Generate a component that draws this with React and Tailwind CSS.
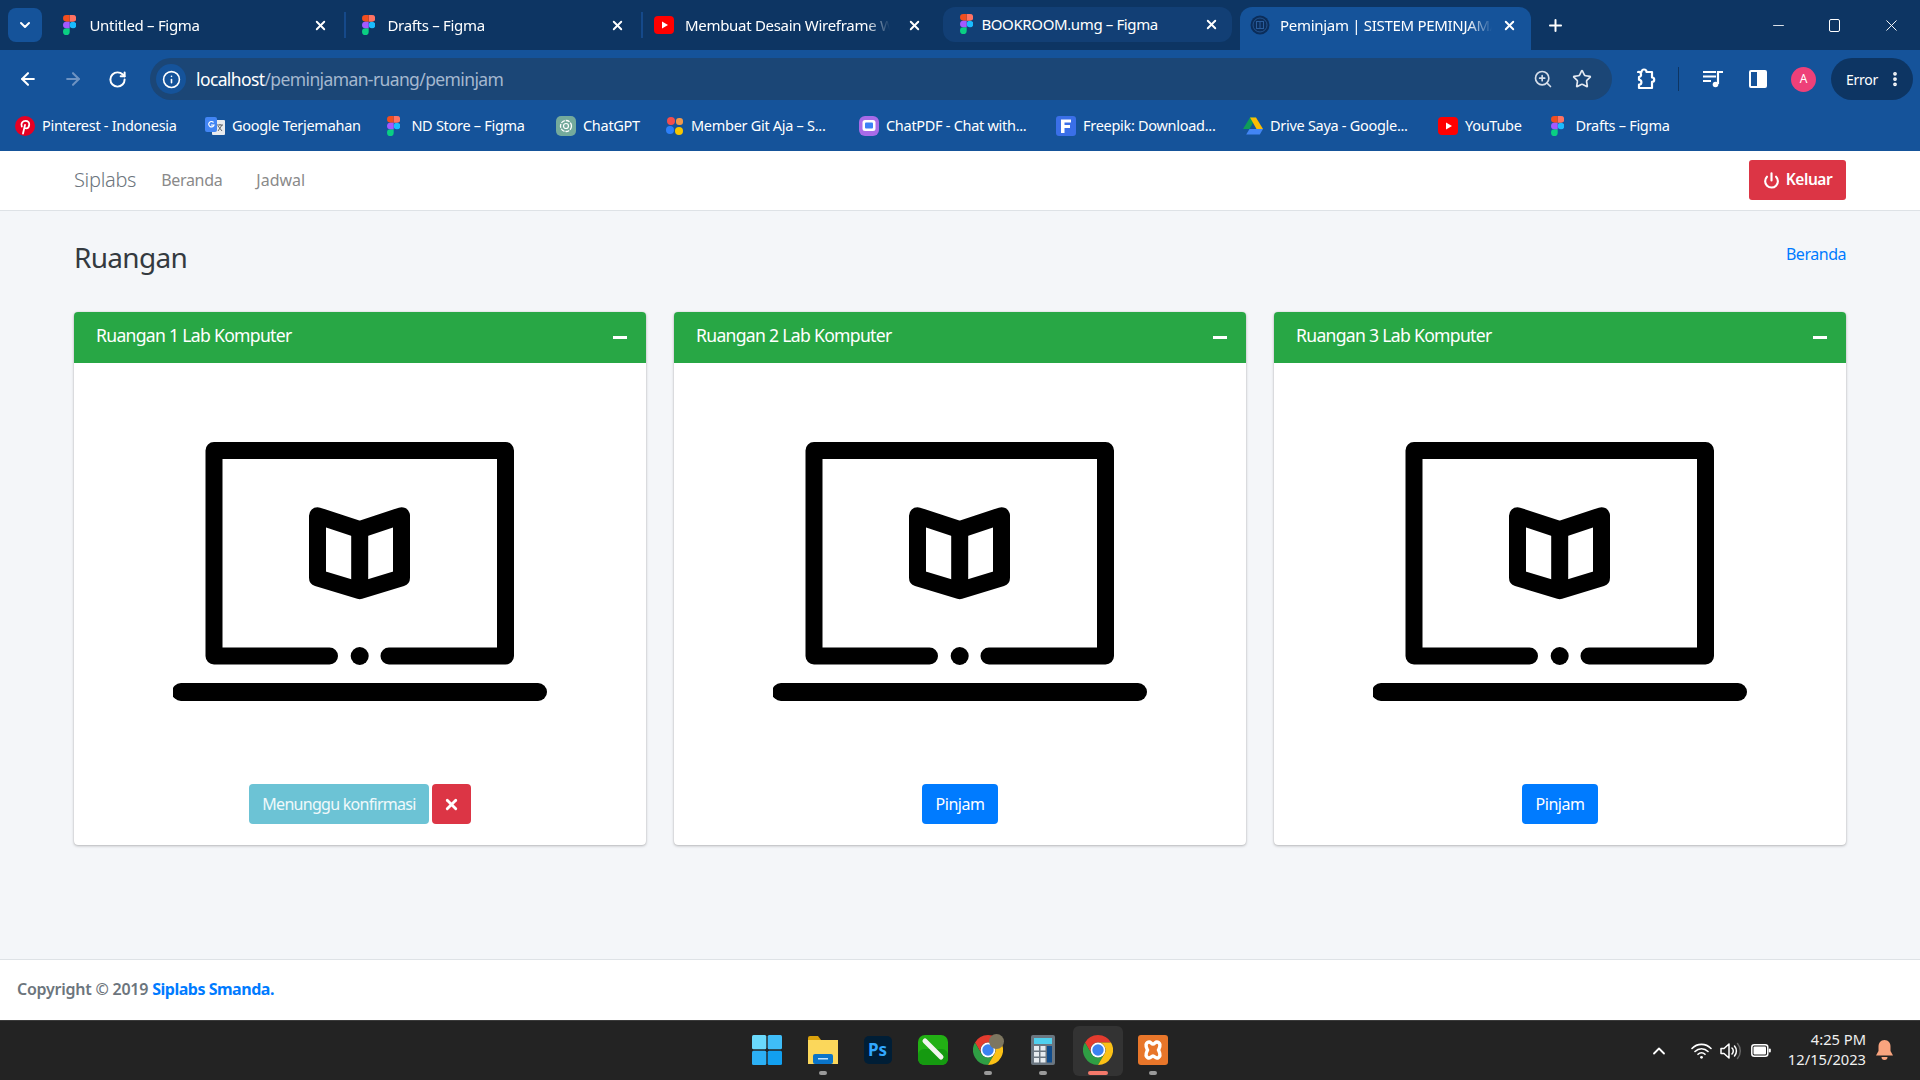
import { ArrowLeft, ArrowRight, RotateCw, Info, ZoomIn, Star, MoreVertical, Plus, X, Minus, ChevronDown, ChevronUp, Power } from 'lucide-react';

const sans = 'font-["Noto_Sans",sans-serif]';

// favicons
const FigmaIcon = ({ size = 20 }) => (
  <svg width={size * 0.67} height={size} viewBox="0 0 38 57" className="shrink-0">
    <path fill="#1abcfe" d="M19 28.5a9.5 9.5 0 1 1 19 0 9.5 9.5 0 0 1-19 0z" />
    <path fill="#0acf83" d="M0 47.5A9.5 9.5 0 0 1 9.5 38H19v9.5a9.5 9.5 0 1 1-19 0z" />
    <path fill="#ff7262" d="M19 0v19h9.5a9.5 9.5 0 1 0 0-19H19z" />
    <path fill="#f24e1e" d="M0 9.5A9.5 9.5 0 0 0 9.5 19H19V0H9.5A9.5 9.5 0 0 0 0 9.5z" />
    <path fill="#a259ff" d="M0 28.5A9.5 9.5 0 0 0 9.5 38H19V19H9.5A9.5 9.5 0 0 0 0 28.5z" />
  </svg>
);

const YoutubeIcon = () => (
  <svg width="20" height="20" viewBox="0 0 20 20" className="shrink-0">
    <rect y="1" width="20" height="18" rx="4" fill="#f00" />
    <path d="M8 6.5 14 10l-6 3.5z" fill="#fff" />
  </svg>
);

const PinterestIcon = () => (
  <svg width="20" height="20" viewBox="0 0 20 20" className="shrink-0">
    <circle cx="10" cy="10" r="10" fill="#e60023" />
    <path d="M8 17.5 10 9M6.8 10.5C5.5 7.5 7.7 4.8 10.5 4.8c2.6 0 4 1.8 3.7 4-.3 2.3-1.6 3.7-3.1 3.6-1 0-1.6-.6-1.7-1.3" fill="none" stroke="#fff" strokeWidth="1.8" strokeLinecap="round" />
  </svg>
);

const TranslateIcon = () => (
  <svg width="20" height="20" viewBox="0 0 20 20" className="shrink-0">
    <rect x="7" y="4" width="13" height="15" rx="1" fill="#e8eaed" />
    <path d="M12 9h6M15 8v1M13 15l4-6M13 10l4 5" stroke="#5f6368" strokeWidth="1" fill="none" />
    <rect y="1" width="12" height="15" rx="2" fill="#4285f4" />
    <path d="M8.5 6.5A2.7 2.7 0 1 0 9 9H6" stroke="#fff" strokeWidth="1.2" fill="none" />
  </svg>
);

const ChatGptIcon = () => (
  <svg width="20" height="20" viewBox="0 0 20 20" className="shrink-0">
    <rect width="20" height="20" rx="5" fill="#74aa9c" />
    <circle cx="10" cy="10" r="5.5" fill="none" stroke="#fff" strokeWidth="1.3" strokeDasharray="4 1" />
    <circle cx="10" cy="10" r="2.5" fill="none" stroke="#fff" strokeWidth="1.2" />
  </svg>
);

const MemberIcon = () => (
  <svg width="18" height="20" viewBox="0 0 18 20" className="shrink-0">
    <circle cx="5" cy="5" r="4" fill="#f24e4e" />
    <rect x="10" y="2" width="7" height="7" rx="3" fill="#f2994a" />
    <circle cx="4" cy="14" r="4" fill="#2d7ff9" />
    <circle cx="13" cy="15" r="4" fill="#f7c600" />
  </svg>
);

const ChatPdfIcon = () => (
  <svg width="20" height="20" viewBox="0 0 20 20" className="shrink-0">
    <rect width="20" height="20" rx="6" fill="#a86be8" />
    <rect x="3.5" y="4" width="13" height="11" rx="2.5" fill="#fff" />
    <rect x="6" y="6.5" width="8" height="6" rx="1" fill="#3b82f6" />
  </svg>
);

const FreepikIcon = () => (
  <svg width="20" height="20" viewBox="0 0 20 20" className="shrink-0">
    <rect width="20" height="20" rx="3" fill="#3a6fe8" />
    <path d="M5 3.5h10v3H8.5v2.5H14v3H8.5V17H5z" fill="#fff" />
  </svg>
);

const DriveIcon = () => (
  <svg width="20" height="20" viewBox="0 0 20 20" className="shrink-0">
    <path d="M7 1.5h6L6.5 13H0z" fill="#0f9d58" />
    <path d="M7 1.5h6l7 11.5h-6.5z" fill="#fbbc04" />
    <path d="M3.2 18.5 6.5 13H20l-3.2 5.5z" fill="#4285f4" />
  </svg>
);

const SiteIcon = () => (
  <svg width="20" height="20" viewBox="0 0 20 20" className="shrink-0">
    <circle cx="10" cy="10" r="9.5" fill="#0b2d5a" />
    <circle cx="10" cy="10" r="7" fill="none" stroke="#2a5d9c" strokeWidth="0.8" />
    <rect x="6.5" y="6.5" width="7" height="7" fill="none" stroke="#2a5d9c" strokeWidth="1" />
    <path d="M10 6.5v7" stroke="#2a5d9c" strokeWidth="1" />
  </svg>
);

const ExtensionIcon = () => (
  <svg width="22" height="22" viewBox="0 0 22 22" fill="none" stroke="#fff" strokeWidth="2.2" strokeLinejoin="round">
    <path d="M4 4h3.5a2.5 2.5 0 0 1 5 0H18v5.5a2.2 2.2 0 0 1 0 4.4V20H5v-3.4a2.4 2.4 0 0 0 0-4.8V9a2.5 2.5 0 0 0-1-5z" />
  </svg>
);

const MediaIcon = () => (
  <svg width="21" height="21" viewBox="0 0 21 21" fill="none" stroke="#fff" strokeWidth="2.2">
    <path d="M0 3h13M0 7.5h13M0 12h8" />
    <path d="M15 3h5M15 2v13" />
    <circle cx="12.5" cy="15.5" r="2.8" fill="#fff" stroke="none" />
  </svg>
);

const ChromeIcon = () => (
  <svg width="30" height="30" viewBox="0 0 30 30">
    <path d="M15 0A15 15 0 0 1 28 7.5H15A7.5 7.5 0 0 0 8.5 18.75L2 7.5A15 15 0 0 1 15 0z" fill="#e33b2e" />
    <path d="M2 7.5 8.5 18.75A7.5 7.5 0 0 0 21.5 18.75L15 30A15 15 0 0 1 2 7.5z" fill="#2f9e44" />
    <path d="M28 7.5A15 15 0 0 1 15 30L21.5 18.75A7.5 7.5 0 0 0 15 7.5H28z" fill="#fbc116" />
    <circle cx="15" cy="15" r="7.4" fill="#fff" />
    <circle cx="15" cy="15" r="5.7" fill="#3b82f0" />
  </svg>
);

const tabs = [
  { title: 'Untitled – Figma', icon: <FigmaIcon />, cls: 'w-[297px] pl-[16px] gap-[13px]' },
  { title: 'Drafts – Figma', icon: <FigmaIcon />, cls: 'w-[297px] pl-[16px] gap-[12px] border-l-2 border-[#15498a]' },
  { title: 'Membuat Desain Wireframe We', icon: <YoutubeIcon />, cls: 'w-[297px] pl-[11px] gap-[11px] border-l-2 border-[#15498a]' },
];

const bookmarks = [
  { title: 'Pinterest - Indonesia', icon: <PinterestIcon />, w: 'w-[190px]' },
  { title: 'Google Terjemahan', icon: <TranslateIcon />, w: 'w-[182px]' },
  { title: 'ND Store – Figma', icon: <FigmaIcon />, w: 'w-[169px]', gap: 'gap-[11px]' },
  { title: 'ChatGPT', icon: <ChatGptIcon />, w: 'w-[110px]' },
  { title: 'Member Git Aja – S...', icon: <MemberIcon />, w: 'w-[193px]' },
  { title: 'ChatPDF - Chat with...', icon: <ChatPdfIcon />, w: 'w-[197px]' },
  { title: 'Freepik: Download...', icon: <FreepikIcon />, w: 'w-[187px]' },
  { title: 'Drive Saya - Google...', icon: <DriveIcon />, w: 'w-[195px]' },
  { title: 'YouTube', icon: <YoutubeIcon />, w: 'w-[113px]' },
  { title: 'Drafts – Figma', icon: <FigmaIcon />, w: 'w-[130px]', gap: 'gap-[11px]' },
];

const BrowserChrome = () => (
  <div className={`shrink-0 text-white ${sans}`}>
    {/* tab strip */}
    <div className="h-[50px] bg-[#0d3563] flex items-center pl-[8px]">
      <div className="w-[34px] h-[34px] rounded-lg bg-[#15539a] flex items-center justify-center mr-[5px] -mt-[1px]">
        <ChevronDown size={16} strokeWidth={3} />
      </div>
      {tabs.map((t) => (
        <div key={t.title} className={`${t.cls} h-[26px] flex items-center pr-[16px]`}>
          {t.icon}
          <span className="flex-1 min-w-0 overflow-hidden whitespace-nowrap text-[15px] tracking-[-0.02em] [mask-image:linear-gradient(to_left,transparent,black_24px)]">{t.title}</span>
          <X size={15} strokeWidth={3} className="shrink-0 ml-[6px]" />
        </div>
      ))}
      <div className="w-[289px] h-[35px] ml-[5px] -mt-[2px] rounded-xl bg-[#123f75] flex items-center gap-[8px] pl-[17px] pr-[13px]">
        <FigmaIcon />
        <span className="flex-1 whitespace-nowrap text-[15px] tracking-[-0.025em]">BOOKROOM.umg – Figma</span>
        <X size={15} strokeWidth={3} />
      </div>
      <div className="w-[291px] h-[43px] ml-[8px] mt-[7px] pb-[7px] rounded-t-xl bg-[#15539a] flex items-center gap-[10px] pl-[10px] pr-[14px]">
        <SiteIcon />
        <span className="flex-1 min-w-0 overflow-hidden whitespace-nowrap text-[15px] tracking-[-0.02em] [mask-image:linear-gradient(to_left,transparent,black_24px)]">Peminjam | SISTEM PEMINJAMA</span>
        <X size={15} strokeWidth={3} className="shrink-0" />
      </div>
      <Plus size={19} strokeWidth={2.5} className="ml-[15px]" />
      <div className="ml-auto flex items-center">
        <Minus size={17} strokeWidth={1.2} className="mr-[42px]" />
        <div className="w-[11px] h-[13px] border border-white rounded-[2px] mr-[42px]" />
        <X size={19} strokeWidth={1.2} className="mr-[19px]" />
      </div>
    </div>

    {/* toolbar */}
    <div className="h-[50px] bg-[#15539a] flex items-center pt-[8px]">
      <div className="w-[150px] flex items-center pl-[18px] gap-[25px] shrink-0">
        <ArrowLeft size={20} strokeWidth={2.5} />
        <ArrowRight size={20} strokeWidth={2.5} className="text-[#6e93c2]" />
        <RotateCw size={19} strokeWidth={2.5} />
      </div>
      <div className="w-[1462px] h-[42px] rounded-full bg-[#1b4676] flex items-center pl-[6px] pr-[20px] shrink-0">
        <div className="w-[30px] h-[30px] rounded-full bg-[#15539a] flex items-center justify-center">
          <Info size={19} strokeWidth={2} />
        </div>
        <span className="ml-[10px] text-[17.5px] tracking-[-0.035em]">localhost<span className="text-[#a5b8cf]">/peminjaman-ruang/peminjam</span></span>
        <ZoomIn size={20} className="ml-auto mr-[19px] text-[#d6deea]" />
        <Star size={20} strokeWidth={2} className="text-[#e4e9f1]" />
      </div>
      <div className="flex-1 flex items-center pl-[22px] pr-[8px]">
        <ExtensionIcon />
        <div className="w-[1px] h-[24px] bg-[#0d3563] ml-[22px]" />
        <div className="ml-[24px] w-[21px] h-[21px]"><MediaIcon /></div>
        <div className="w-[18px] h-[18px] border-2 border-white rounded-[2px] ml-[25px] flex justify-end">
          <div className="w-[8px] bg-white" />
        </div>
        <div className="w-[25px] h-[25px] rounded-full bg-[#ee4079] text-[12px] ml-[24px] flex items-center justify-center">A</div>
        <div className="w-[82px] h-[42px] rounded-full bg-[#0d3563] ml-[15px] flex items-center pl-[15px]">
          <span className="text-[14px] tracking-[-0.02em]">Error</span>
          <MoreVertical size={18} strokeWidth={3} className="ml-[8px]" />
        </div>
      </div>
    </div>

    {/* bookmarks */}
    <div className="h-[51px] bg-[#15539a] flex items-center pl-[15px]">
      {bookmarks.map((b) => (
        <div key={b.title} className={`${b.w} ${b.gap || 'gap-[7px]'} shrink-0 flex items-center`}>
          {b.icon}
          <span className="text-[14.5px] tracking-[-0.02em] whitespace-nowrap">{b.title}</span>
        </div>
      ))}
    </div>
  </div>
);

const LaptopBook = () => (
  <svg width="375" height="260" viewBox="1 0 375 260" fill="none" stroke="#000" strokeWidth="17" strokeLinecap="round" strokeLinejoin="round">
    <path d="M157.5 214H42V8.5H333.5V214H217" />
    <circle cx="187.7" cy="214" r="9" fill="#000" stroke="none" />
    <path d="M9 250H366" strokeWidth="18" />
    <path d="M145.5 73.7 187.7 87.6 229.5 73.7V135.8L187.7 148.7 145.5 135.8Z" />
    <path d="M187.7 87.6V148.7" strokeLinecap="butt" />
  </svg>
);

const RoomCard = ({ name, waiting }) => (
  <div className="flex-1 h-[533px] bg-white rounded-[4px] overflow-hidden shadow-[0_0_1px_rgba(0,0,0,0.2),0_1px_3px_rgba(0,0,0,0.25)] flex flex-col">
    <div className="h-[51px] shrink-0 bg-[#28a745] text-white flex items-center justify-between pl-[22px] pr-[19px]">
      <span className="text-[17.6px] tracking-[-0.04em] -mt-[4px]">{name}</span>
      <div className="w-[14px] h-[3px] bg-white" />
    </div>
    <div className="flex-1 flex flex-col items-center pt-[79px]">
      <LaptopBook />
      <div className="mt-auto mb-[21px] flex gap-[3px]">
        {waiting ? (
          <>
            <button className="h-[40px] w-[180px] rounded-[4px] bg-[#6cc3d5] text-white/90 text-[16px] tracking-[-0.045em]">Menunggu konfirmasi</button>
            <button className="h-[40px] w-[39px] rounded-[4px] bg-[#dc3545] text-white flex items-center justify-center">
              <X size={17} strokeWidth={4} />
            </button>
          </>
        ) : (
          <button className="h-[40px] w-[76px] rounded-[4px] bg-[#007bff] text-white text-[16px] tracking-[-0.03em]">Pinjam</button>
        )}
      </div>
    </div>
  </div>
);

const Page = () => (
  <div className={`flex-1 min-h-0 flex flex-col bg-[#f4f6f9] ${sans}`}>
    <nav className="h-[60px] shrink-0 bg-white border-b border-[#dee2e6] flex items-center pl-[74px] pr-[74px] pb-[1px]">
      <span className="text-[20px] font-light text-[#6c757d] tracking-[-0.015em]">Siplabs</span>
      <a className="ml-[25px] text-[#8a8a8a] text-[16px] tracking-[-0.02em]">Beranda</a>
      <a className="ml-[34px] text-[#8a8a8a] text-[16px] tracking-[0em]">Jadwal</a>
      <button className="ml-auto w-[97px] h-[40px] bg-[#dc3545] rounded-[3px] text-white text-[15.5px] tracking-[-0.03em] font-semibold flex items-center justify-center gap-[6px]">
        <Power size={17} strokeWidth={3} /> Keluar
      </button>
    </nav>
    <div className="flex-1 px-[74px]">
      <div className="flex justify-between pt-[25px] h-[101px]">
        <h1 className="text-[28px] leading-[42px] text-[#343a40] tracking-[-0.025em]">Ruangan</h1>
        <a className="text-[16px] text-[#007bff] leading-[36px] tracking-[-0.03em]">Beranda</a>
      </div>
      <div className="flex gap-[28px]">
        <RoomCard name="Ruangan 1 Lab Komputer" waiting />
        <RoomCard name="Ruangan 2 Lab Komputer" />
        <RoomCard name="Ruangan 3 Lab Komputer" />
      </div>
    </div>
    <footer className="h-[61px] shrink-0 bg-white border-t border-[#dee2e6] flex items-center pl-[17px] pb-[2px] text-[16px] font-semibold tracking-[-0.015em] text-[#6c757d]">
      <span>Copyright © 2019</span>
      <span className="ml-[4px] text-[#007bff] font-bold tracking-[-0.03em]">Siplabs Smanda.</span>
    </footer>
  </div>
);

const Dot = ({ active }) => (
  <div className={active ? 'w-[20px] h-[4px] rounded-full bg-[#f4796b]' : 'w-[8px] h-[4px] rounded-full bg-[#9a9a9a]'} />
);

const TaskIcon = ({ children, dot, active, w }) => (
  <div className={`${w} h-[50px] pb-[2px] flex flex-col items-center justify-center relative shrink-0 ${active ? 'bg-[#333] rounded-md' : ''}`}>
    {children}
    {dot && <div className="absolute bottom-[1px]"><Dot active={active} /></div>}
  </div>
);

const Taskbar = () => (
  <div className="h-[60px] shrink-0 bg-[#232323] border-t border-[#3a3a3a] flex items-center relative font-['Noto_Sans',sans-serif]">
    <div className="flex items-center ml-[739px]">
      <TaskIcon w="w-[56px]">
        <svg width="30" height="30" viewBox="0 0 30 30">
          <rect width="14.3" height="14.3" rx="1.5" fill="#6ad9fb" />
          <rect x="15.7" width="14.3" height="14.3" rx="1.5" fill="#3fbdf8" />
          <rect y="15.7" width="14.3" height="14.3" rx="1.5" fill="#2cb0f5" />
          <rect x="15.7" y="15.7" width="14.3" height="14.3" rx="1.5" fill="#12a0f0" />
        </svg>
      </TaskIcon>
      <TaskIcon w="w-[55px]" dot>
        <svg width="30" height="28" viewBox="0 0 30 28">
          <path d="M0 2a2 2 0 0 1 2-2h8l3 4h-13z" fill="#dba20c" />
          <rect y="4" width="30" height="24" fill="#fbd75b" />
          <rect x="5" y="18" width="20" height="10" rx="2" fill="#0a74c9" />
          <rect x="10" y="22" width="10" height="1.5" fill="#bfe3ff" />
        </svg>
      </TaskIcon>
      <TaskIcon w="w-[55px]">
        <div className="w-[28px] h-[28px] rounded-[5px] bg-[#001e36] text-[#31a8ff] text-[17px] font-bold flex items-center justify-center leading-none">Ps</div>
      </TaskIcon>
      <TaskIcon w="w-[55px]">
        <svg width="30" height="30" viewBox="0 0 30 30">
          <rect width="30" height="30" rx="7" fill="#22b014" />
          <rect y="14" width="30" height="16" rx="6" fill="#159a10" />
          <path d="M7 6 23 22" stroke="#f2f5ee" strokeWidth="5" strokeLinecap="round" />
        </svg>
      </TaskIcon>
      <TaskIcon w="w-[55px]" dot>
        <div className="relative h-[30px]">
          <ChromeIcon />
          <div className="absolute -top-[1px] -right-[1px] w-[15px] h-[15px] rounded-full bg-[#7d7660]" />
        </div>
      </TaskIcon>
      <TaskIcon w="w-[55px]" dot>
        <svg width="24" height="30" viewBox="0 0 24 30">
          <rect width="24" height="30" rx="2" fill="#6b7680" />
          <rect x="3" y="3" width="18" height="6" fill="#4fd0ee" />
          <rect x="3" y="11" width="5" height="4.5" fill="#e6ebef" />
          <rect x="9.5" y="11" width="5" height="4.5" fill="#e6ebef" />
          <rect x="3" y="17" width="5" height="4.5" fill="#e6ebef" />
          <rect x="9.5" y="17" width="5" height="4.5" fill="#e6ebef" />
          <rect x="3" y="23" width="5" height="4.5" fill="#e6ebef" />
          <rect x="9.5" y="23" width="5" height="4.5" fill="#e6ebef" />
          <rect x="16" y="11" width="5" height="16.5" fill="#0f4c8c" />
        </svg>
      </TaskIcon>
      <div className="ml-[3px]">
        <TaskIcon w="w-[50px]" dot active>
          <ChromeIcon />
        </TaskIcon>
      </div>
      <TaskIcon w="w-[60px]" dot>
        <svg width="30" height="30" viewBox="0 0 30 30">
          <rect width="30" height="30" rx="3" fill="#e8762a" />
          <path d="M9.500 7.500c3-2 3.500 1.500 5.500 1.500s2.500-3.500 5.500-1.500 1 5 0 7.500c1 2.500 3 5.500 0 7.500s-3.500-1.500-5.500-1.500-2.500 3.500-5.500 1.500-1-5 0-7.500c-1-2.500-3-5.500 0-7.500z" fill="none" stroke="#fff" strokeWidth="3.400" />
        </svg>
      </TaskIcon>
    </div>
    <div className="ml-auto flex items-center text-white">
      <ChevronUp size={20} strokeWidth={2.2} className="mr-[22px]" />
      <svg width="21" height="16" viewBox="0 0 21 16" fill="none" stroke="#fff" strokeWidth="1.6" strokeLinecap="round" className="mr-[8px]">
        <path d="M1 5.500a13 13 0 0 1 19 0M4 8.500a9 9 0 0 1 13 0M7 11.300a5 5 0 0 1 7 0" />
        <circle cx="10.500" cy="14.300" r="1.400" fill="#fff" stroke="none" />
      </svg>
      <svg width="22" height="18" viewBox="0 0 22 18" fill="none" stroke="#fff" strokeWidth="1.500" strokeLinejoin="round" className="mr-[9px]">
        <path d="M1 6.500v5h3l5 4.500v-14l-5 4.500z" />
        <path d="M12 6a4.200 4.200 0 0 1 0 6M14.500 4a7.500 7.500 0 0 1 0 10" strokeLinecap="round" />
        <path d="M17.500 1.500a11.500 11.500 0 0 1 0 15" stroke="#666" strokeLinecap="round" />
      </svg>
      <svg width="20" height="13" viewBox="0 0 20 13" className="mr-[15px]">
        <rect x="0.800" y="0.800" width="16" height="11.400" rx="2.500" fill="none" stroke="#fff" strokeWidth="1.500" />
        <rect x="2.500" y="2.500" width="12.500" height="8" rx="1" fill="#fff" />
        <rect x="17.800" y="4.500" width="2" height="4" rx="1" fill="#fff" />
      </svg>
      <div className="w-[80px] text-right text-[14.7px] leading-[20px] text-[#f0f0f0] -mt-[4px] whitespace-nowrap">
        <div>4:25 PM</div>
        <div>12/15/2023</div>
      </div>
      <svg width="19" height="21" viewBox="0 0 19 21" className="ml-[9px] mr-[26px]">
        <path d="M9.500 0C5.500 0 3.500 3 3.500 6.500V11L1 15.500h17L15.500 11V6.500C15.500 3 13.500 0 9.500 0z" fill="#f9a47e" />
        <path d="M6.500 17h6a3 3 0 0 1-6 0z" fill="#f9a47e" />
      </svg>
    </div>
  </div>
);

export default function App() {
  return (
    <div className="h-screen w-full overflow-hidden flex flex-col">
      <BrowserChrome />
      <Page />
      <Taskbar />
    </div>
  );
}
